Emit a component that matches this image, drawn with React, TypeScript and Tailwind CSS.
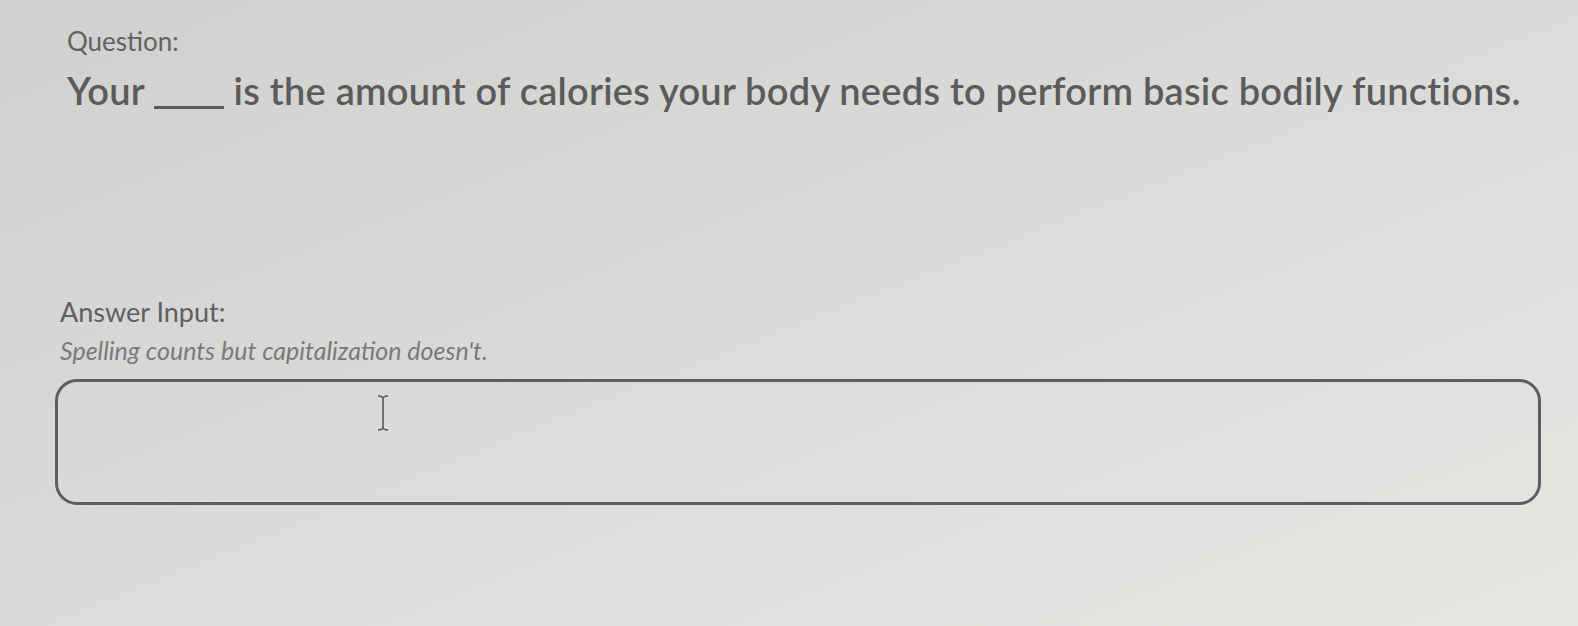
import React from 'react';

const font = { fontFamily: 'Lato, "Open Sans", sans-serif' };

function IBeam() {
  return (
    <svg width="12" height="36" viewBox="0 0 12 36" className="absolute left-[319px] top-[13px]">
      <path d="M1 1 Q6 1 6 4 Q6 1 11 1 M6 4 V32 M1 35 Q6 35 6 32 Q6 35 11 35" fill="none" stroke="#5a5a5a" strokeWidth="1.6" />
    </svg>
  );
}

export default function App() {
  return (
    <div
      className="w-[1578px] h-[626px] bg-gradient-to-br from-[#d0d0ce] via-[#dbdbda] to-[#e6e6e3] text-[#5b5b5b] pt-[28px] leading-none"
      style={font}
    >
      <div className="pl-[67px]">
        <div className="text-[26px] text-[#626262]">Question:</div>
        <p className="mt-[17px] text-[38px] font-semibold tracking-[0.25px]">
          Your <span className="inline-block w-[70px] border-b-[3px] border-[#5b5b5b] mb-[-4px]"></span> is the amount of calories your body needs to perform basic bodily functions.
        </p>
      </div>

      <div className="pl-[60px] mt-[189px]">
        <div className="text-[27px] text-[#606060]">Answer Input:</div>
        <div className="mt-[13px] text-[25px] italic text-[#7a7a7a]">Spelling counts but capitalization doesn't.</div>
      </div>

      <div className="relative mt-[16px] ml-[55px] w-[1486px] h-[126px] rounded-[22px] border-[3px] border-[#5e5e5e]">
        <IBeam />
      </div>
    </div>
  );
}
